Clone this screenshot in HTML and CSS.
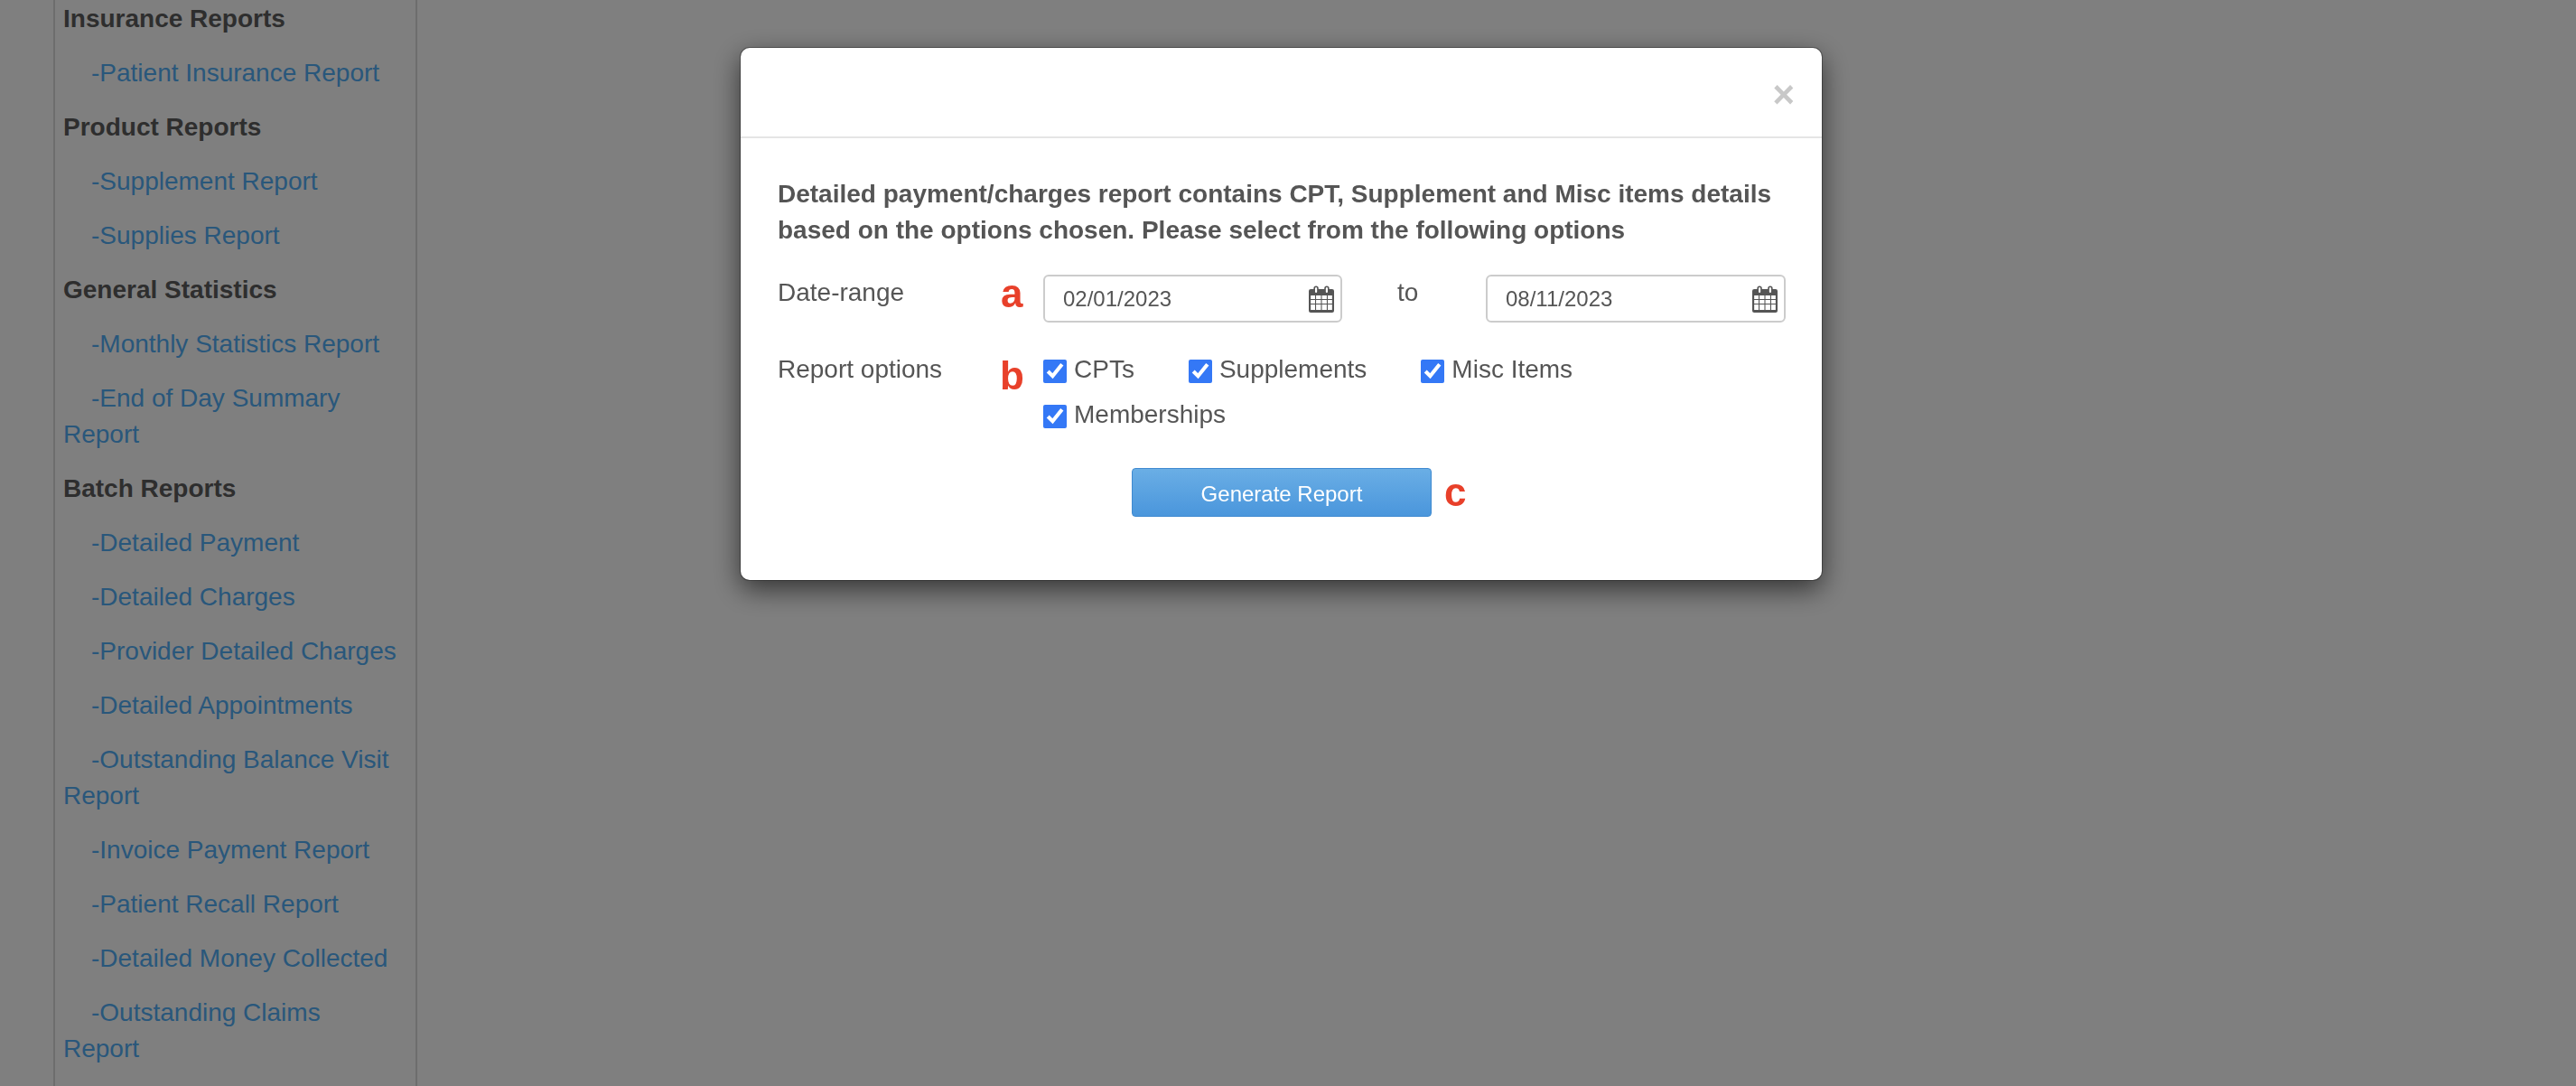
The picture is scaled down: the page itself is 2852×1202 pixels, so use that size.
FILE: index.html
```html
<!DOCTYPE html>
<html lang="en">
<head>
  <meta charset="UTF-8" />
  <title>Reports</title>
  <link rel="stylesheet" href="styles.css">
</head>
<body>

  <div class="sidebar">
    <h4>Insurance Reports</h4>
    <a href="#">-Patient Insurance Report</a>
    <h4>Product Reports</h4>
    <a href="#">-Supplement Report</a>
    <a href="#">-Supplies Report</a>
    <h4>General Statistics</h4>
    <a href="#">-Monthly Statistics Report</a>
    <a href="#">-End of Day Summary Report</a>
    <h4>Batch Reports</h4>
    <a href="#">-Detailed Payment</a>
    <a href="#">-Detailed Charges</a>
    <a href="#">-Provider Detailed Charges</a>
    <a href="#">-Detailed Appointments</a>
    <a href="#">-Outstanding Balance Visit Report</a>
    <a href="#">-Invoice Payment Report</a>
    <a href="#">-Patient Recall Report</a>
    <a href="#">-Detailed Money Collected</a>
    <a href="#">-Outstanding Claims Report</a>
  </div>

  <div class="backdrop">
    <div class="modal">
      <div class="modal-header">
        <span class="close">×</span>
      </div>
      <div class="modal-body">
        <p class="intro">Detailed payment/charges report contains CPT, Supplement and Misc items details based on the options chosen. Please select from the following options</p>

        <div class="form-row">
          <span class="row-label">Date-range</span>
          <span class="marker marker-a">a</span>
          <div class="date-field">
            <input type="text" value="02/01/2023" />
            <svg class="cal" viewBox="0 0 26 30" preserveAspectRatio="none"><use href="#calendar"/></svg>
          </div>
          <span class="to">to</span>
          <div class="date-field wide">
            <input type="text" value="08/11/2023" />
            <svg class="cal" viewBox="0 0 26 30" preserveAspectRatio="none"><use href="#calendar"/></svg>
          </div>
        </div>

        <div class="form-row options-row">
          <span class="row-label">Report options</span>
          <span class="marker marker-b">b</span>
          <div class="checks">
            <label class="check"><input type="checkbox" checked />CPTs</label>
            <label class="check"><input type="checkbox" checked />Supplements</label>
            <label class="check"><input type="checkbox" checked />Misc Items</label>
            <label class="check"><input type="checkbox" checked />Memberships</label>
          </div>
        </div>

        <div class="actions">
          <button type="button">Generate Report</button>
          <span class="marker marker-c">c</span>
        </div>
      </div>
    </div>
  </div>

  <svg class="defs" width="0" height="0">
    <symbol id="calendar" viewBox="0 0 26 30">
      <path fill="#555" fill-rule="evenodd" d="M2 4h3V3a2.500 2.500 0 0 1 5 0v1h6V3a2.500 2.500 0 0 1 5 0v1h3a2 2 0 0 1 2 2v22a2 2 0 0 1-2 2H2a2 2 0 0 1-2-2V6a2 2 0 0 1 2-2zM2 11v4h4.500v-4zM7.500 11v4h5v-4zM13.500 11v4h5v-4zM19.500 11v4H24v-4zM2 16v4h4.500v-4zM7.500 16v4h5v-4zM13.500 16v4h5v-4zM19.500 16v4H24v-4zM2 21v6h4.500v-6zM7.500 21v6h5v-6zM13.500 21v6h5v-6zM19.500 21v6H24v-6z"/>
      <path fill="#fff" d="M6.500 3a1 1 0 0 1 2 0v4a1 1 0 0 1-2 0zM17.500 3a1 1 0 0 1 2 0v4a1 1 0 0 1-2 0z"/>
    </symbol>
  </svg>

</body>
</html>
```

FILE: styles.css
```css
* {
  box-sizing: border-box;
}

html, body {
  height: 100%;
}

body {
  margin: 0;
  overflow: hidden;
  background-color: #fff;
  font-family: 'Liberation Sans', Arial, sans-serif;
  font-size: 28px;
  line-height: 40px;
  color: #555;
}

.sidebar {
  width: 403px;
  height: 100%;
  margin-left: 59px;
  padding: 1px 16px 0 9px;
  border-left: 2px solid #dadada;
  border-right: 2px solid #dadada;
}

.sidebar h4 {
  margin: 0 0 20px;
  font-size: 28px;
  line-height: 40px;
  font-weight: 700;
  color: #5c5c5c;
}

.sidebar a {
  display: block;
  margin-bottom: 20px;
  text-indent: 31px;
  color: #52aef6;
  text-decoration: none;
}

.backdrop {
  position: fixed;
  inset: 0;
  padding: 53px 0 0 820px;
  background-color: rgba(0, 0, 0, 0.5);
}

.modal {
  width: 1197px;
  height: 589px;
  background-color: #fff;
  border-radius: 10px;
  box-shadow: 0 0 0 1px rgba(0, 0, 0, 0.3), 0 10px 30px rgba(0, 0, 0, 0.6);
}

.modal-header {
  display: flex;
  justify-content: flex-end;
  height: 100px;
  padding: 32px 30px 0 0;
  border-bottom: 2px solid #e5e5e5;
}

.close {
  font-size: 42px;
  line-height: 40px;
  font-weight: 700;
  color: #c8c8c8;
}

.modal-body {
  padding: 42px 40px 0 41px;
}

.intro {
  margin: 0 0 29px;
  font-weight: 700;
}

.form-row {
  display: flex;
  align-items: flex-start;
}

.row-label {
  width: 245px;
}

.marker {
  width: 49px;
  font-size: 44px;
  line-height: 50px;
  font-weight: 700;
  color: #e8402a;
}

.marker-a {
  padding-left: 2px;
  margin-top: -4px;
}

.marker-b {
  padding-left: 1px;
  margin-top: 2px;
}

.date-field {
  display: flex;
  align-items: center;
  width: 331px;
  height: 53px;
  padding: 0 7px 0 20px;
  border: 2px solid #ccc;
  border-radius: 6px;
}

.date-field.wide {
  width: 332px;
}

.date-field input {
  flex: 1;
  min-width: 0;
  padding: 0;
  border: none;
  outline: none;
  font: 24px 'Liberation Sans', Arial, sans-serif;
  color: #555;
}

.cal {
  width: 28px;
  height: 30px;
}

.to {
  width: 159px;
  padding-left: 61px;
}

.options-row {
  margin-top: 32px;
}

.checks {
  display: flex;
  flex-wrap: wrap;
  gap: 10px 60px;
  width: 822px;
}

.check {
  display: flex;
  align-items: center;
  height: 40px;
}

.check input {
  width: 26px;
  height: 26px;
  margin: 4px 8px 0 0;
  accent-color: #3478f6;
}

.actions {
  display: flex;
  align-items: center;
  margin: 39px 0 0 392px;
}

.actions button {
  width: 332px;
  height: 54px;
  padding: 3px 0 0;
  border: 1px solid #3f8ad0;
  border-radius: 4px;
  background: linear-gradient(#6aaee5, #4a96dc);
  font: 24px 'Liberation Sans', Arial, sans-serif;
  color: #fff;
}

.marker-c {
  margin-left: 14px;
}

.defs {
  position: absolute;
}
```
